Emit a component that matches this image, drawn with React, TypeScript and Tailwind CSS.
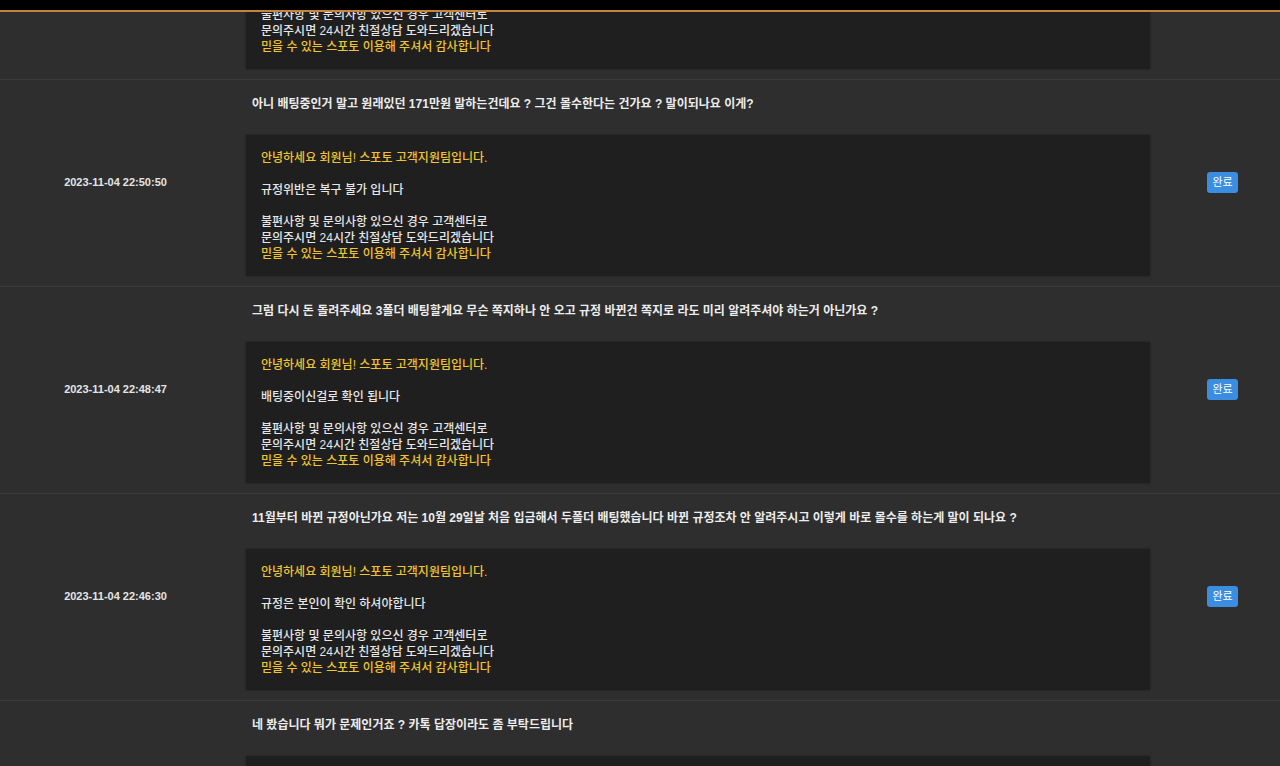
const greeting = "안녕하세요 회원님! 스포토 고객지원팀입니다.";
const closing = "믿을 수 있는 스포토 이용해 주셔서 감사합니다";

interface Inquiry {
    date: string;
    question: string;
    answer: string;
}

const inquiries: Inquiry[] = [
    {
        date: "2023-11-04 22:55:12",
        question: "배팅한거 왜 적중특례 처리가 된건가요 ? 확인 부탁드립니다",
        answer: "규정위반으로 인한 처리입니다",
    },
    {
        date: "2023-11-04 22:50:50",
        question: "아니 배팅중인거 말고 원래있던 171만원 말하는건데요 ? 그건 몰수한다는 건가요 ? 말이되나요 이게?",
        answer: "규정위반은 복구 불가 입니다",
    },
    {
        date: "2023-11-04 22:48:47",
        question: "그럼 다시 돈 돌려주세요 3폴더 배팅할게요 무슨 쪽지하나 안 오고 규정 바뀐건 쪽지로 라도 미리 알려주셔야 하는거 아닌가요 ?",
        answer: "배팅중이신걸로 확인 됩니다",
    },
    {
        date: "2023-11-04 22:46:30",
        question: "11월부터 바뀐 규정아닌가요 저는 10월 29일날 처음 입금해서 두폴더 배팅했습니다 바뀐 규정조차 안 알려주시고 이렇게 바로 몰수를 하는게 말이 되나요 ?",
        answer: "규정은 본인이 확인 하셔야합니다",
    },
    {
        date: "2023-11-04 22:44:02",
        question: "네 봤습니다 뭐가 문제인거죠 ? 카톡 답장이라도 좀 부탁드립니다",
        answer: "쪽지 확인 부탁드립니다",
    },
];

function InquiryRow({ item }: { item: Inquiry }) {
    return (
        <div className="grid grid-cols-[231px_934px_1fr] items-center border-b border-[#3a3a3a] bg-[#2e2e2e]">
            <div className="pb-[2px] text-center text-[11px] font-bold text-[#e4e4e4]">{item.date}</div>
            <div className="px-[15px] pt-[16px] pb-[10px]">
                <p className="pl-[6px] text-[12px] leading-[16px] font-bold text-[#ececec]">{item.question}</p>
                <div className="mt-[23px] h-[141px] bg-[#1f1f1f] pl-[15px] pt-[15px] text-[12px] leading-[16px] font-medium text-[#e6e6e6] shadow-[0_0_2px_rgba(0,0,0,0.4)]">
                    <p className="text-[#f0c330]">{greeting}</p>
                    <p>&nbsp;</p>
                    <p>{item.answer}</p>
                    <p>&nbsp;</p>
                    <p>불편사항 및 문의사항 있으신 경우 고객센터로</p>
                    <p>문의주시면 24시간 친절상담 도와드리겠습니다</p>
                    <p className="text-[#f0c330]">{closing}</p>
                </div>
            </div>
            <div className="flex justify-center pb-[2px]">
                <span className="flex h-[21px] items-center rounded-[3px] bg-[#3a8de0] px-[5px] text-[11px] text-white">완료</span>
            </div>
        </div>
    );
}

export default function App() {
    return (
        <div
            className="h-[766px] overflow-hidden bg-[#2b2b2b]"
            style={{ fontFamily: '"Liberation Sans", "Noto Sans CJK KR", sans-serif' }}
        >
            <div className="relative z-10 h-[12px] border-b-2 border-[#c8843c] bg-black" />
            <div className="mt-[-139px]">
                {inquiries.map((item) => (
                    <InquiryRow key={item.date} item={item} />
                ))}
            </div>
        </div>
    );
}
